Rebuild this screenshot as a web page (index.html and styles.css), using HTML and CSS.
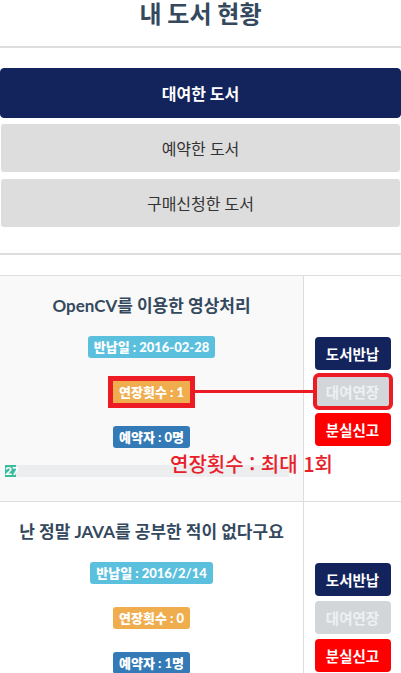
FILE: index.html
```html
<!DOCTYPE html>
<html lang="ko">
<head>
<meta charset="utf-8">
<link rel="stylesheet" href="styles.css">
</head>
<body>
<div class="page">
  <h1 class="page-title">내 도서 현황</h1>
  <hr class="rule rule-top">
  <nav class="tabs">
    <button class="tab tab-active">대여한 도서</button>
    <button class="tab">예약한 도서</button>
    <button class="tab">구매신청한 도서</button>
  </nav>
  <hr class="rule rule-bottom">
  <div class="book-table">
    <div class="book-row striped">
      <div class="book-info">
        <div class="book-title">OpenCV를 이용한 영상처리</div>
        <div class="badge-line"><span class="badge badge-info">반납일 : 2016-02-28</span></div>
        <div class="badge-line"><span class="badge badge-warning marked">연장횟수 : 1</span></div>
        <div class="badge-line"><span class="badge badge-primary">예약자 : 0명</span></div>
        <div class="progress"><div class="progress-bar" style="width:11px">27</div></div>
      </div>
      <div class="book-actions">
        <button class="act act-return">도서반납</button>
        <button class="act act-extend marked-btn">대여연장</button>
        <button class="act act-lost">분실신고</button>
      </div>
    </div>
    <div class="book-row">
      <div class="book-info">
        <div class="book-title">난 정말 JAVA를 공부한 적이 없다구요</div>
        <div class="badge-line"><span class="badge badge-info">반납일 : 2016/2/14</span></div>
        <div class="badge-line"><span class="badge badge-warning">연장횟수 : 0</span></div>
        <div class="badge-line"><span class="badge badge-primary">예약자 : 1명</span></div>
      </div>
      <div class="book-actions">
        <button class="act act-return">도서반납</button>
        <button class="act act-extend">대여연장</button>
        <button class="act act-lost">분실신고</button>
      </div>
    </div>
  </div>
  <div class="annot-line"></div>
  <div class="annot-text">연장횟수 : 최대 1회</div>
</div>
</body>
</html>
```

FILE: styles.css
```css
html, body {
  margin: 0;
  padding: 0;
  background: #fff;
}
.page {
  position: relative;
  width: 401px;
  font-family: Lato, "Noto Sans CJK KR", sans-serif;
  color: #333;
}
.page-title {
  margin: 0;
  font-size: 24px;
  line-height: 28px;
  font-weight: 700;
  text-align: center;
  color: #34495e;
}
.rule {
  border: 0;
  margin: 0;
  height: 2px;
  background: #ddd;
}
.rule-top {
  margin-top: 18px;
}
.tabs {
  display: flex;
  flex-direction: column;
  gap: 5px;
  margin-top: 20px;
}
.tab {
  display: block;
  box-sizing: border-box;
  width: 100%;
  height: 50px;
  margin: 0;
  border: 1px solid #fff;
  border-radius: 4px;
  background: #ddd;
  color: #333;
  font-family: Lato, "Noto Sans CJK KR", sans-serif;
  font-size: 16px;
  font-weight: 400;
}
.tab-active {
  background: #13235b;
  border-color: #13235b;
  color: #fff;
  font-weight: 700;
}
.rule-bottom {
  margin-top: 25px;
}
.book-table {
  margin-top: 20px;
}
.book-row {
  display: grid;
  grid-template-columns: 304px 1fr;
  border-top: 1px solid #ddd;
}
.book-info {
  border-right: 1px solid #ddd;
  padding: 19px 0 24px;
  display: flex;
  flex-direction: column;
  align-items: center;
}
.striped .book-info {
  background: #f9f9f9;
}
.book-title {
  font-size: 17px;
  line-height: 22px;
  font-weight: 700;
  color: #34495e;
}
.badge-line {
  margin-top: 23px;
  height: 22px;
}
.book-title + .badge-line {
  margin-top: 19px;
}
.badge {
  display: inline-block;
  height: 22px;
  line-height: 22px;
  padding: 0 6px;
  border-radius: 3px;
  color: #fff;
  font-size: 13px;
  font-weight: 900;
}
.badge-info { background: #5bc0de; }
.badge-warning { background: #f0ad4e; }
.badge-primary { background: #337ab7; }
.marked {
  outline: 5px solid #ed1c24;
  border-radius: 0;
}
.progress {
  align-self: stretch;
  margin: 17px 14px 0 5px;
  height: 12px;
  background: #ebedef;
}
.progress-bar {
  height: 12px;
  background: #3cbc9c;
  color: #fff;
  font-size: 12px;
  font-weight: 900;
  line-height: 12px;
  text-align: left;
  white-space: nowrap;
  overflow: visible;
}
.book-actions {
  display: flex;
  flex-direction: column;
  align-items: center;
  gap: 5px;
  padding-top: 61px;
}
.act {
  box-sizing: border-box;
  width: 76px;
  height: 33px;
  margin: 0;
  padding: 0;
  border: 0;
  border-radius: 4px;
  font-family: Lato, "Noto Sans CJK KR", sans-serif;
  font-size: 14.5px;
  font-weight: 700;
  color: #fff;
}
.act-return { background: #13235b; }
.act-extend { background: #d3d6d9; color: #eef0f2; }
.act-lost { background: #ff0000; }
.marked-btn {
  outline: 4px solid #ed1c24;
  outline-offset: -2px;
}
.annot-line {
  position: absolute;
  left: 195px;
  top: 390px;
  width: 118px;
  height: 3px;
  background: #ed1c24;
}
.annot-text {
  position: absolute;
  left: 170px;
  top: 451px;
  font-family: "Noto Sans CJK KR", sans-serif;
  font-size: 20px;
  line-height: 26px;
  font-weight: 500;
  color: #e8202a;
}
```
